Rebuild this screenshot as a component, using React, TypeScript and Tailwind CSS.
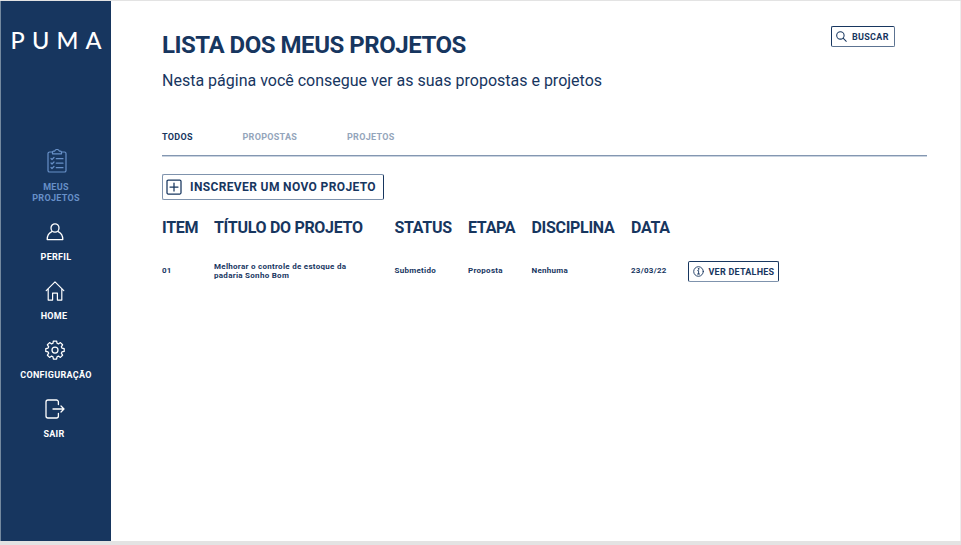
import type { ReactNode } from "react";

function NavItem({ icon, children, className }: { icon: ReactNode; children: ReactNode; className: string }) {
  return (
    <a className={`flex flex-col text-center text-[9px] font-bold leading-[10.5px] tracking-[0.3px] ${className}`}>
      <span className="flex h-6 items-center justify-center">{icon}</span>
      {children}
    </a>
  );
}

const stroke = {
  fill: "none",
  stroke: "currentColor",
  strokeLinecap: "round" as const,
  strokeLinejoin: "round" as const,
};

const ClipboardIcon = () => (
  <svg width="20" height="24" viewBox="0 0 20 24" {...stroke} strokeWidth="1.2">
    <path d="M5 3H2.6A1.6 1.6 0 0 0 1 4.6v16.8A1.6 1.6 0 0 0 2.6 23h14.8a1.6 1.6 0 0 0 1.6-1.6V4.6A1.6 1.6 0 0 0 17.4 3H15" />
    <path d="M5.5 4.8V3.2c0-.6.4-1 1-1h1.2a2.4 2.4 0 0 1 4.6 0h1.2c.6 0 1 .4 1 1v1.6z" />
    <path d="M4 9.5l1 1 2-2M9.3 9.7H16M4 14l1 1 2-2M9.3 14.2H16M4 18.5l1 1 2-2M9.3 18.7H16" />
  </svg>
);

const PersonIcon = () => (
  <svg width="18" height="18" viewBox="0 0 18 18" {...stroke} strokeWidth="1.3">
    <ellipse cx="9" cy="5" rx="4" ry="4.2" />
    <path d="M5.8 8.7C3.1 10 1.2 12.7 1.2 16.6h15.6c0-3.9-1.9-6.6-4.6-7.9" />
  </svg>
);

const HomeIcon = () => (
  <svg width="20" height="20" viewBox="0 0 20 20" {...stroke} strokeWidth="1.2">
    <path d="M1.2 9.6 10 .9l8.8 8.7M3.2 7.8v11.3h4.4v-7h4.8v7h4.4V7.8" />
  </svg>
);

const GearIcon = () => (
  <svg width="20" height="20" viewBox="0 0 20 20" {...stroke} strokeWidth="1.25">
    <circle cx="10" cy="10" r="3" />
    <path d="M8.4 1h3.2l.5 2.3 1.3.6 2-1.3 2.2 2.2-1.3 2 .6 1.3 2.3.5v2.8l-2.3.5-.6 1.3 1.3 2-2.2 2.2-2-1.3-1.3.6-.5 2.3H8.4l-.5-2.3-1.3-.6-2 1.3-2.2-2.2 1.3-2-.6-1.3L.8 11.4V8.6l2.3-.5.6-1.3-1.3-2 2.2-2.2 2 1.3 1.3-.6z" />
  </svg>
);

const ExitIcon = () => (
  <svg width="20" height="20" viewBox="0 0 20 20" {...stroke} strokeWidth="1.3">
    <path d="M13.4 5.5V3a2 2 0 0 0-2-2H3a2 2 0 0 0-2 2v14a2 2 0 0 0 2 2h8.4a2 2 0 0 0 2-2v-2.5M8 10h11M16 7l3 3-3 3" />
  </svg>
);

const SearchIcon = () => (
  <svg width="11" height="11" viewBox="0 0 11 11" {...stroke} strokeWidth="1.05">
    <circle cx="4.4" cy="4.4" r="3.7" />
    <path d="m7.1 7.1 3.2 3.2" />
  </svg>
);

const PlusBoxIcon = () => (
  <svg width="16" height="16" viewBox="0 0 16 16" {...stroke} strokeWidth="1.25">
    <rect x="1" y="1" width="14" height="14" rx="1.2" />
    <path d="M8 4v8M4 8h8" />
  </svg>
);

const InfoIcon = () => (
  <svg width="11" height="11" viewBox="0 0 11 11" {...stroke} strokeWidth="0.9">
    <circle cx="5.5" cy="5.5" r="4.8" />
    <path d="M4.7 4.6h.9v3.2M4.5 8h2.1" />
    <circle cx="5.5" cy="2.9" r="0.35" fill="currentColor" />
  </svg>
);

export default function App() {
  return (
    <div className="flex h-[545px] w-[961px] flex-col overflow-hidden border-t border-[#e3e3e3] bg-white font-['Roboto',sans-serif] text-[#17365f]">
      <div className="flex h-[540px] border-r border-[#ededed]">
        <aside className="h-full w-[111px] shrink-0 border-l border-[#74899f] bg-[#17365f] text-white">
          <div className="flex h-[77px] items-center pl-[9.5px] font-['Lato',sans-serif] text-[23.5px] font-medium leading-6 tracking-[7.2px]">
            PUMA
          </div>
          <nav className="flex flex-col pt-[71px]">
            <NavItem icon={<ClipboardIcon />} className="h-[71px] pl-[2px] text-[#6790c8]">
              <span className="-ml-[2px] pt-[9px]">MEUS<br />PROJETOS</span>
            </NavItem>
            <NavItem icon={<PersonIcon />} className="h-[59px] pr-[2px]">
              <span className="pl-[2px] pt-[8px]">PERFIL</span>
            </NavItem>
            <NavItem icon={<HomeIcon />} className="h-[59px] pr-[2px]">
              <span className="-ml-[2px] pt-[8px]">HOME</span>
            </NavItem>
            <NavItem icon={<GearIcon />} className="h-[59px] pr-[2px]">
              <span className="pl-[2px] pt-[8px]">CONFIGURAÇÃO</span>
            </NavItem>
            <NavItem icon={<ExitIcon />} className="h-[59px] pr-[2px]">
              <span className="-ml-[2px] pt-[8px]">SAIR</span>
            </NavItem>
          </nav>
        </aside>
        <main className="flex min-w-0 flex-1 flex-col pl-[51px] pr-[33px]">
          <header className="flex h-[118px] justify-between pr-[32px] pt-[25px]">
            <div className="whitespace-nowrap">
              <h1 className="h-[37px] text-[24px] font-bold leading-[38px] tracking-[-0.48px]">LISTA DOS MEUS PROJETOS</h1>
              <p className="text-[16px] leading-9">Nesta página você consegue ver as suas propostas e projetos</p>
            </div>
            <button className="flex h-[21px] w-[64px] items-center gap-[5px] rounded-[2px] border border-b-[#5c7391] border-l-[#17365f] border-r-[#5c7391] border-t-[#17365f] pl-[4px] text-[9px] font-bold leading-[10px] tracking-[0.3px]">
              <SearchIcon />
              <span className="pt-px">BUSCAR</span>
            </button>
          </header>
          <div className="flex h-[37px] items-center border-b border-[#8497b1] text-[9px] font-bold leading-[10px] tracking-[0.3px] shadow-[0_1px_0_#c9d3e0]">
            <span className="w-[80.5px]">TODOS</span>
            <span className="w-[104.5px] text-[#94a5bb]">PROPOSTAS</span>
            <span className="text-[#94a5bb]">PROJETOS</span>
          </div>
          <button className="mt-[18px] flex h-[26px] w-[222px] items-center gap-2 whitespace-nowrap rounded-[2px] border border-b-[#7f93ad] border-l-[#7f93ad] border-r-[#17365f] border-t-[#7f93ad] pl-[3px] text-[12px] font-bold leading-[14px] tracking-[0.37px]">
            <PlusBoxIcon />
            <span className="-mt-px">INSCREVER UM NOVO PROJETO</span>
          </button>
          <div className="mt-[18px] grid h-5 grid-cols-[52px_180.5px_73.5px_63.5px_99.5px_58px_92px] items-center whitespace-nowrap text-[16px] font-bold leading-5 tracking-[-0.3px]">
            <span>ITEM</span>
            <span>TÍTULO DO PROJETO</span>
            <span>STATUS</span>
            <span>ETAPA</span>
            <span>DISCIPLINA</span>
            <span>DATA</span>
          </div>
          <div className="mt-[22px] grid h-[22px] grid-cols-[52px_180.5px_73.5px_63.5px_99.5px_57px_92px] items-center whitespace-nowrap text-[8px] font-bold leading-[9.5px] tracking-[0.28px]">
            <span>01</span>
            <span>Melhorar o controle de estoque da<br />padaria Sonho Bom</span>
            <span>Submetido</span>
            <span>Proposta</span>
            <span>Nenhuma</span>
            <span>23/03/22</span>
            <button className="flex h-[21px] w-[91px] items-center gap-[4.5px] rounded-[2px] border border-b-[#7f93ad] border-l-[#17365f] border-r-[#17365f] border-t-[#17365f] pl-[4px] text-[9px] leading-[10px] tracking-[0.24px]">
              <InfoIcon />
              <span className="pt-px">VER DETALHES</span>
            </button>
          </div>
        </main>
      </div>
      <div className="h-1 w-full bg-[#e3e3e3]" />
    </div>
  );
}
